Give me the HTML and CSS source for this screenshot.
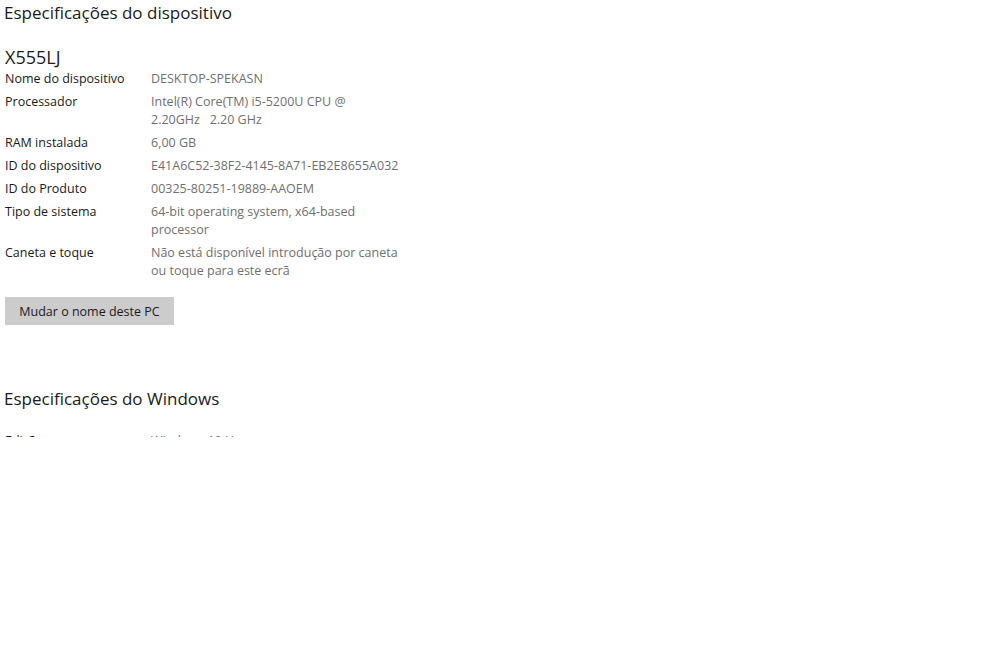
FILE: index.html
```html
<!DOCTYPE html>
<html lang="pt">
<head>
    <meta charset="UTF-8">
    <meta name="viewport" content="width=device-width, initial-scale=1.0">
    <title>Acerca de</title>
    <link rel="stylesheet" href="styles.css">
</head>
<body>
    <div class="page">
        <h2 class="section-title">Especificações do dispositivo</h2>
        <h3 class="device-name">X555LJ</h3>
        <div class="specs">
            <div class="label">Nome do dispositivo</div>
            <div class="value">DESKTOP-SPEKASN</div>
            <div class="label">Processador</div>
            <div class="value">Intel(R) Core(TM) i5-5200U CPU @<br>2.20GHz &nbsp; 2.20 GHz</div>
            <div class="label">RAM instalada</div>
            <div class="value">6,00 GB</div>
            <div class="label">ID do dispositivo</div>
            <div class="value">E41A6C52-38F2-4145-8A71-EB2E8655A032</div>
            <div class="label">ID do Produto</div>
            <div class="value">00325-80251-19889-AAOEM</div>
            <div class="label">Tipo de sistema</div>
            <div class="value">64-bit operating system, x64-based<br>processor</div>
            <div class="label">Caneta e toque</div>
            <div class="value">Não está disponível introdução por caneta<br>ou toque para este ecrã</div>
        </div>
        <button class="rename-btn">Mudar o nome deste PC</button>

        <h2 class="section-title windows">Especificações do Windows</h2>
        <div class="specs">
            <div class="label">Edição</div>
            <div class="value">Windows 10 Home</div>
        </div>
    </div>
</body>
</html>
```

FILE: styles.css
```css
body {
    margin: 0;
    background: #fff;
    font-family: "Open Sans", "Noto Sans", sans-serif;
    color: #1a1a1a;
}
.page {
    height: 437px;
    overflow: hidden;
    padding-left: 5px;
}
.section-title {
    font-size: 17px;
    font-weight: normal;
    line-height: 26px;
    margin: 0 0 0 -1px;
    color: #1a1a1a;
}
.device-name {
    font-size: 18px;
    font-weight: normal;
    line-height: 22px;
    margin: 20px 0 0 0;
}
.specs {
    display: grid;
    grid-template-columns: 146px 280px;
    row-gap: 5px;
    margin-top: 2px;
    font-size: 12.5px;
    line-height: 18px;
}
.label {
    color: #1a1a1a;
}
.value {
    color: #6f6f6f;
}
.rename-btn {
    margin-top: 17px;
    width: 169px;
    height: 28px;
    background: #cccccc;
    border: none;
    padding: 0;
    font-family: inherit;
    font-size: 12.5px;
    color: #1a1a1a;
}
.windows {
    margin-top: 61px;
    margin-bottom: 20px;
}
```
